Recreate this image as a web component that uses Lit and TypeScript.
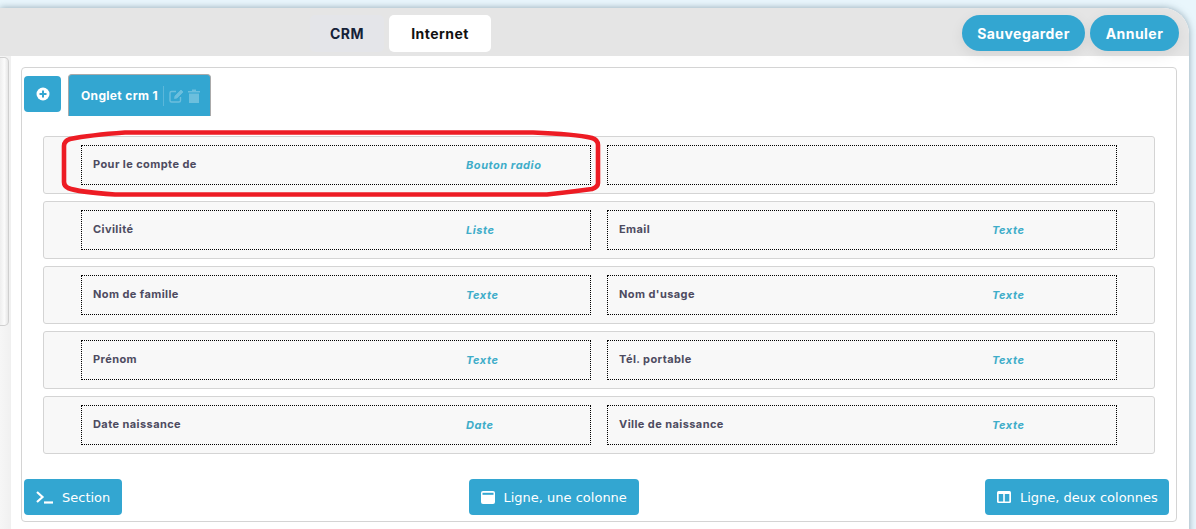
import { LitElement, html, css, svg } from "lit";
import { customElement } from "lit/decorators.js";

const rows: [string, string, string, string][] = [
  ["Pour le compte de", "Bouton radio", "", ""],
  ["Civilité", "Liste", "Email", "Texte"],
  ["Nom de famille", "Texte", "Nom d'usage", "Texte"],
  ["Prénom", "Texte", "Tél. portable", "Texte"],
  ["Date naissance", "Date", "Ville de naissance", "Texte"],
];

@customElement("app-root")
export class AppRoot extends LitElement {
  static styles = css`
    :host { display: block; position: relative; width: 1196px; height: 529px; overflow: hidden; background: #e9f6fc; font-family: "Inter", "Liberation Sans", sans-serif; }
    .panel { margin-top: 8px; width: 1189px; height: 540px; background: #fff; border-radius: 0 26px 0 0; box-shadow: 0 0 7px rgba(70,100,120,.55); display: flex; flex-direction: column; overflow: hidden; }
    .head { height: 48px; flex: none; background: #e5e5e5; display: flex; align-items: flex-start; padding: 7px 10px 0 310px; box-sizing: border-box; }
    .tab { height: 37px; display: flex; align-items: center; justify-content: center; font-size: 14px; font-weight: 700; letter-spacing: .45px; color: #152238; border-radius: 5px; box-sizing: border-box; }
    .crm { width: 74px; background: #e4e5e9; margin-right: 5px; }
    .internet { width: 102px; background: #fff; color: #111; }
    .actions { margin-left: auto; display: flex; gap: 5px; }
    .pill { height: 36px; border-radius: 18px; background: #33a6d1; color: #fff; font-size: 14px; font-weight: 700; letter-spacing: .45px; display: flex; align-items: center; justify-content: center; box-shadow: 0 4px 14px rgba(0,0,0,.08); }
    .save { width: 123px; } .cancel { width: 89px; }
    .body { flex: 1; display: flex; align-items: flex-start; }
    .track { width: 11px; align-self: stretch; flex: none; margin-right: 10px; background: linear-gradient(90deg,#f6f6f6,#f0f0f0); }
    .thumb { width: 9px; height: 269px; margin-top: 1px; box-sizing: border-box; background: linear-gradient(90deg,#eeeeee,#fbfbfb 55%,#e6e6e6); border-right: 1px solid #cfcfcf; border-bottom: 1px solid #cfcfcf; border-top: 1px solid #cfcfcf; border-radius: 0 5px 5px 0; }
    .card { width: 1156px; height: 455px; margin-top: 11px; box-sizing: border-box; border: 1px solid #d4d4d4; border-radius: 4px; padding: 6px 2px 0 2px; display: flex; flex-direction: column; }
    .tabs { display: flex; align-items: flex-start; gap: 7px; height: 62px; flex: none; }
    .add { width: 37px; height: 36px; margin-top: 2px; background: #33a6d1; border-radius: 4px; display: flex; align-items: center; justify-content: center; }
    .otab { width: 143px; height: 42px; box-sizing: border-box; background: #33a6d1; border-top: 1px solid #aaa; border-left: 1px solid #aaa; border-right: 1px solid #aaa; border-radius: 4px 4px 0 0; color: #fff; font-size: 12px; font-weight: 700; letter-spacing: .33px; display: flex; align-items: center; padding-left: 12px; }
    .sep { width: 1px; height: 20px; background: rgba(255,255,255,.2); margin: 0 5px; }
    .otab svg { opacity: .28; }
    .trash { margin-left: 4px; }
    .rows { display: flex; flex-direction: column; gap: 7px; padding: 0 19px; }
    .row { height: 58px; box-sizing: border-box; border: 1px solid #d4d4d4; border-radius: 3px; background: #f8f8f8; padding: 8px 37px; display: grid; grid-template-columns: 510px 510px; gap: 16px; }
    .cell { height: 40px; box-sizing: border-box; border: 1px dotted #000; padding: 0 11px; display: flex; align-items: flex-start; }
    .label { width: 373px; flex: none; margin-top: 11px; font-size: 11px; line-height: 14px; font-weight: 700; letter-spacing: .42px; color: #4d4b60; }
    .type { margin-top: 12px; font-size: 11px; line-height: 14px; font-weight: 700; font-style: italic; letter-spacing: .55px; color: #3fadc9; }
    .foot { display: flex; justify-content: space-between; padding: 25px 5px 0 0; }
    .btn { height: 36px; background: #33a6d1; border-radius: 4px; color: #fff; font-family: "DejaVu Sans", sans-serif; font-size: 13px; display: flex; align-items: center; gap: 9px; padding-left: 12px; box-sizing: border-box; }
    .b1 { width: 98px; } .b2 { width: 170px; } .b3 { width: 184px; }
    .ink { position: absolute; left: 0; top: 0; pointer-events: none; }
  `;

  render() {
    return html`
      <div class="panel">
        <div class="head">
          <div class="tab crm">CRM</div>
          <div class="tab internet">Internet</div>
          <div class="actions">
            <div class="pill save">Sauvegarder</div>
            <div class="pill cancel">Annuler</div>
          </div>
        </div>
        <div class="body">
          <div class="track"><div class="thumb"></div></div>
          <div class="card">
            <div class="tabs">
              <div class="add">
                <svg width="14" height="14" viewBox="0 0 14 14"><circle cx="7" cy="7" r="6.5" fill="#fff"/><path d="M7 3.5v7M3.5 7h7" stroke="#33a6d1" stroke-width="2"/></svg>
              </div>
              <div class="otab">
                Onglet crm 1<span class="sep"></span>
                <svg width="15" height="14" viewBox="0 0 15 14" fill="none" stroke="#fff" stroke-width="1.4"><path d="M7 2.5H2.5a1.5 1.5 0 0 0-1.5 1.5v7.5A1.5 1.5 0 0 0 2.5 13H10a1.5 1.5 0 0 0 1.5-1.5V8"/><path d="M5.5 9.5l.5-2.5 6-6 2 2-6 6z" fill="#fff" stroke-width=".8"/></svg>
                <svg class="trash" width="12" height="14" viewBox="0 0 12 14"><path fill="#fff" d="M0 2h4V.5h4V2h4v1.5H0zM1 4.5h10V14H1z"/></svg>
              </div>
            </div>
            <div class="rows">
              ${rows.map(r => html`
                <div class="row">
                  <div class="cell"><span class="label">${r[0]}</span><span class="type">${r[1]}</span></div>
                  <div class="cell"><span class="label">${r[2]}</span><span class="type">${r[3]}</span></div>
                </div>`)}
            </div>
            <div class="foot">
              <div class="btn b1">
                <svg width="17" height="14" viewBox="0 0 17 14" fill="none" stroke="#fff" stroke-width="2.2"><path d="M1 2l5.5 5L1 12"/><path d="M8 12.5h9"/></svg>
                Section
              </div>
              <div class="btn b2">
                <svg width="14" height="13" viewBox="0 0 14 13"><rect width="14" height="13" rx="2" fill="#fff"/><rect x="1.5" y="1.8" width="11" height="2" fill="#33a6d1"/></svg>
                Ligne, une colonne
              </div>
              <div class="btn b3">
                <svg width="14" height="13" viewBox="0 0 14 13"><rect width="14" height="12" rx="1.5" fill="#fff"/><rect x="1.7" y="3" width="4.5" height="7.5" fill="#33a6d1"/><rect x="7.8" y="3" width="4.5" height="7.5" fill="#33a6d1"/></svg>
                Ligne, deux colonnes
              </div>
            </div>
          </div>
        </div>
      </div>
      <svg class="ink" width="1196" height="529" fill="none">
        ${svg`<path stroke="#ed1c24" stroke-width="4.6" d="M125 132.5L533 132.5Q575 134 592 138Q598 140 598 145L598 183Q598 187 592 189Q570 192 547 194.5L115 194.5Q78 192 68 188Q64 186 64 182L64 146Q64 141 70 139Q90 135 125 132.5Z"/>`}
      </svg>
    `;
  }
}
